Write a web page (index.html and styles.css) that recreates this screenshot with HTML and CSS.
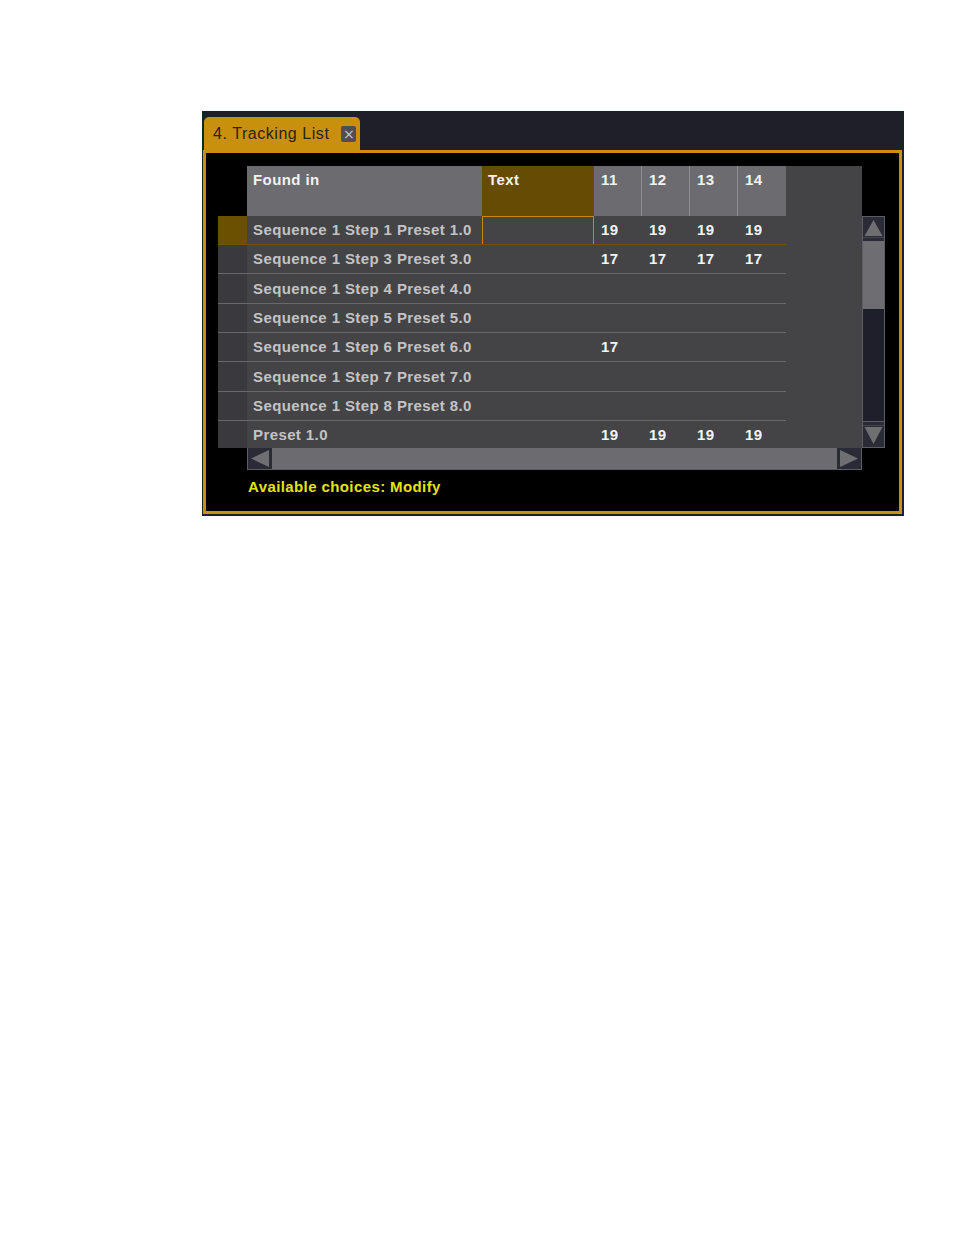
FILE: index.html
```html
<!DOCTYPE html>
<html>
<head>
<meta charset="utf-8">
<link rel="stylesheet" href="styles.css">
</head>
<body>
<div class="window">
  <div class="titlebar">
    <div class="tab">
      <span class="tab-title">4. Tracking List</span>
      <span class="tab-close">×</span>
    </div>
  </div>
  <div class="panel">
    <div class="grid">
      <div class="header">
        <div class="hcell h-found">Found in</div>
        <div class="hcell h-text">Text</div>
        <div class="hcell h-num sep">11</div>
        <div class="hcell h-num sep">12</div>
        <div class="hcell h-num sep">13</div>
        <div class="hcell h-num">14</div>
        <div class="hcell h-fill"></div>
      </div>
      <div class="header-side"></div>

      <div class="rows">
        <div class="row selected">
          <div class="line">
            <div class="gutter"></div>
            <div class="c-found">Sequence 1 Step 1 Preset 1.0</div>
            <div class="c-text"><div class="editbox"></div></div>
            <div class="c-num">19</div><div class="c-num">19</div><div class="c-num">19</div><div class="c-num">19</div>
          </div>
          <div class="c-fill"></div>
        </div>
        <div class="row">
          <div class="line">
            <div class="gutter"></div>
            <div class="c-found">Sequence 1 Step 3 Preset 3.0</div>
            <div class="c-text"></div>
            <div class="c-num">17</div><div class="c-num">17</div><div class="c-num">17</div><div class="c-num">17</div>
          </div>
          <div class="c-fill"></div>
        </div>
        <div class="row tall">
          <div class="line">
            <div class="gutter"></div>
            <div class="c-found">Sequence 1 Step 4 Preset 4.0</div>
            <div class="c-text"></div>
            <div class="c-num"></div><div class="c-num"></div><div class="c-num"></div><div class="c-num"></div>
          </div>
          <div class="c-fill"></div>
        </div>
        <div class="row">
          <div class="line">
            <div class="gutter"></div>
            <div class="c-found">Sequence 1 Step 5 Preset 5.0</div>
            <div class="c-text"></div>
            <div class="c-num"></div><div class="c-num"></div><div class="c-num"></div><div class="c-num"></div>
          </div>
          <div class="c-fill"></div>
        </div>
        <div class="row">
          <div class="line">
            <div class="gutter"></div>
            <div class="c-found">Sequence 1 Step 6 Preset 6.0</div>
            <div class="c-text"></div>
            <div class="c-num">17</div><div class="c-num"></div><div class="c-num"></div><div class="c-num"></div>
          </div>
          <div class="c-fill"></div>
        </div>
        <div class="row tall">
          <div class="line">
            <div class="gutter"></div>
            <div class="c-found">Sequence 1 Step 7 Preset 7.0</div>
            <div class="c-text"></div>
            <div class="c-num"></div><div class="c-num"></div><div class="c-num"></div><div class="c-num"></div>
          </div>
          <div class="c-fill"></div>
        </div>
        <div class="row">
          <div class="line">
            <div class="gutter"></div>
            <div class="c-found">Sequence 1 Step 8 Preset 8.0</div>
            <div class="c-text"></div>
            <div class="c-num"></div><div class="c-num"></div><div class="c-num"></div><div class="c-num"></div>
          </div>
          <div class="c-fill"></div>
        </div>
        <div class="row last">
          <div class="line">
            <div class="gutter"></div>
            <div class="c-found">Preset 1.0</div>
            <div class="c-text"></div>
            <div class="c-num">19</div><div class="c-num">19</div><div class="c-num">19</div><div class="c-num">19</div>
          </div>
          <div class="c-fill"></div>
        </div>
      </div>

      <div class="vscroll">
        <div class="vbtn up">
          <svg width="21" height="24" viewBox="0 0 21 24"><rect width="21" height="24" fill="#2b2b38"/><polygon points="10.5,3 19.5,19 1.5,19" fill="#6f6f71"/><rect y="20" width="21" height="1" fill="#44444e"/></svg>
        </div>
        <div class="vthumb"></div>
        <div class="vtrack"></div>
        <div class="vbtn down">
          <svg width="21" height="25" viewBox="0 0 21 25"><rect width="21" height="25" fill="#2b2b38"/><rect y="3" width="21" height="1" fill="#44444e"/><polygon points="1.5,5 19.5,5 10.5,22" fill="#6f6f71"/></svg>
        </div>
      </div>

      <div class="gutter-foot"></div>
      <div class="hscroll">
        <div class="hbtn">
          <svg width="24" height="21" viewBox="0 0 24 21"><rect width="24" height="21" fill="#2b2b38"/><polygon points="3,10.5 21,2 21,19" fill="#6f6f71"/></svg>
        </div>
        <div class="htrack"></div>
        <div class="hbtn">
          <svg width="24" height="21" viewBox="0 0 24 21"><rect width="24" height="21" fill="#2b2b38"/><polygon points="3,2 21,10.5 3,19" fill="#6f6f71"/></svg>
        </div>
      </div>
    </div>
    <div class="status">Available choices: Modify</div>
  </div>
</div>
</body>
</html>
```

FILE: styles.css
```css
html, body {
  margin: 0;
  padding: 0;
  background: #ffffff;
}

body {
  padding: 111px 0 0 202px;
  font-family: "Liberation Sans", Arial, sans-serif;
}

.window {
  box-sizing: border-box;
  width: 702px;
  height: 405px;
  border: 1px solid #0e2a1a;
  background: #1e1f29;
  display: flex;
  flex-direction: column;
}

.titlebar {
  height: 38px;
  padding: 5px 0 0 1px;
  box-sizing: border-box;
  display: flex;
  align-items: flex-end;
}

.tab {
  height: 33px;
  width: 156px;
  box-sizing: border-box;
  background: #c8900c;
  border-radius: 5px 5px 0 0;
  display: flex;
  align-items: center;
  padding-left: 9px;
  gap: 12px;
}

.tab-title {
  font-size: 16px;
  letter-spacing: 0.55px;
  color: #2a2410;
  line-height: 33px;
}

.tab-close {
  width: 15px;
  height: 16px;
  border-radius: 2px;
  background: #4e4e54;
  color: #c9c9c9;
  font-size: 14px;
  line-height: 16px;
  text-align: center;
  font-family: "DejaVu Sans", sans-serif;
}

.panel {
  width: 699px;
  height: 364px;
  box-sizing: border-box;
  border: 3px solid #c8900c;
  background: #000000;
  padding: 13px 0 0 12px;
}

.grid {
  display: grid;
  grid-template-columns: 29px 615px 23px;
  grid-template-rows: 50px 232px 22px;
}

.header {
  grid-column: 2;
  grid-row: 1;
  display: flex;
  background: #444446;
}

.header-side {
  grid-column: 3;
  grid-row: 1;
}

.hcell {
  box-sizing: border-box;
  font-size: 15px;
  font-weight: bold;
  letter-spacing: 0.4px;
  line-height: 18px;
  color: #f2f2f2;
  padding: 5px 0 0 6px;
}

.h-found {
  width: 235px;
  background: #6c6c70;
}

.h-text {
  width: 112px;
  background: #664b03;
}

.h-num {
  width: 48px;
  background: #6c6c70;
  padding-left: 7px;
}

.h-num.sep {
  border-right: 1px solid #8e8e92;
}

.h-fill {
  flex: 1;
}

.rows {
  grid-column: 1 / 3;
  grid-row: 2;
  display: flex;
  flex-direction: column;
  overflow: hidden;
}

.row {
  display: flex;
  height: 29px;
  flex-shrink: 0;
  background: #444446;
}

.row.tall {
  height: 30px;
}

.row.last {
  height: 27px;
}

.line {
  display: flex;
  width: 568px;
  border-bottom: 1px solid #68686c;
}

.row.selected .line {
  border-bottom-color: #6f5208;
}

.row.last .line {
  border-bottom: none;
}

.c-fill {
  flex: 1;
  background: #444446;
}

.gutter {
  width: 29px;
  background: #3a3a3e;
}

.row.selected .gutter {
  background: #6b5002;
}

.c-found,
.c-num {
  box-sizing: border-box;
  font-size: 15px;
  font-weight: bold;
  letter-spacing: 0.4px;
  line-height: 28px;
  padding-left: 6px;
}

.row.tall .c-found,
.row.tall .c-num {
  line-height: 30px;
}

.c-found {
  width: 235px;
  color: #c3c3c5;
}

.c-text {
  width: 112px;
  display: flex;
}

.editbox {
  flex: 1;
  box-sizing: border-box;
  border: 1px solid #c48a0a;
  border-bottom: none;
}

.c-num {
  width: 48px;
  color: #f4f4f4;
  padding-left: 7px;
}

.vscroll {
  grid-column: 3;
  grid-row: 2;
  box-sizing: border-box;
  border: 1px solid #5c5c64;
  display: flex;
  flex-direction: column;
  background: #1e1f2b;
}

.vbtn {
  height: 24px;
  line-height: 0;
}

.vbtn.down {
  height: 25px;
}

.vthumb {
  height: 68px;
  background: #6e6e72;
}

.vtrack {
  flex: 1;
  background: #1e1f2b;
  border-bottom: 1px solid #5c5c64;
}

.gutter-foot {
  grid-column: 1;
  grid-row: 3;
}

.hscroll {
  grid-column: 2;
  grid-row: 3;
  display: flex;
  background: #6c6c70;
  box-sizing: border-box;
  border: 1px solid #5c5c64;
  border-top: none;
}

.hbtn {
  width: 24px;
  line-height: 0;
}

.htrack {
  flex: 1;
  background: #6c6c70;
}

.status {
  margin: 8px 0 0 30px;
  font-size: 15px;
  font-weight: bold;
  letter-spacing: 0.4px;
  line-height: 18px;
  color: #e4e40c;
}
```
